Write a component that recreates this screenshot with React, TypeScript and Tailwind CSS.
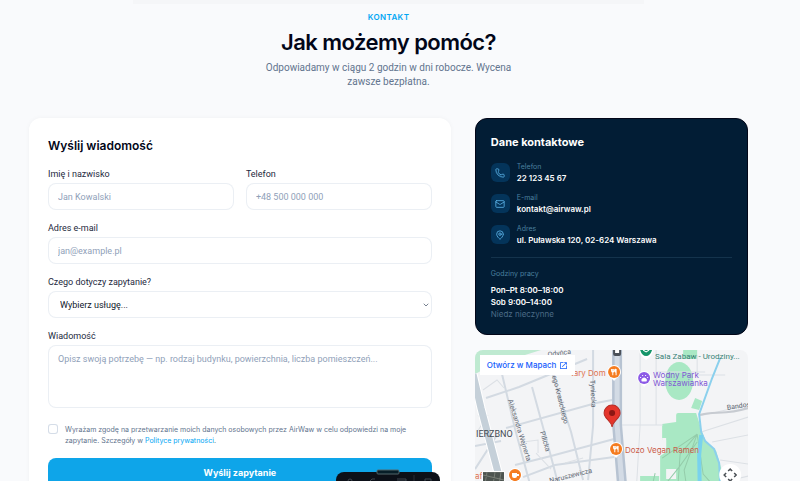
import React from 'react';
import { Mail, MapPin, Phone, ChevronDown } from 'lucide-react';

const labelClass = "block font-['Roboto',sans-serif] text-[9px] leading-3 text-slate-800";
const fieldClass =
  "block w-full rounded-lg border border-slate-200/70 bg-white px-[9px] font-['Roboto',sans-serif] text-[9px] leading-3 text-slate-900 placeholder:text-slate-400 outline-none";

const contacts = [
  { icon: Phone, label: 'Telefon', value: '22 123 45 67' },
  { icon: Mail, label: 'E-mail', value: 'kontakt@airwaw.pl' },
  { icon: MapPin, label: 'Adres', value: 'ul. Puławska 120, 02-624 Warszawa' },
];

const SectionHeader: React.FC = () => (
  <header className="text-center">
    <p className="text-[8px] leading-3 font-semibold tracking-wider text-sky-500">KONTAKT</p>
    <h2 className="mt-[5px] text-[22px] leading-7 font-semibold tracking-tight text-slate-950">Jak możemy pomóc?</h2>
    <p className="mx-auto mt-[5px] max-w-[260px] font-['Roboto',sans-serif] text-[10px] leading-[14px] text-slate-500">
      Odpowiadamy w ciągu 2 godzin w dni robocze. Wycena zawsze bezpłatna.
    </p>
  </header>
);

const ContactForm: React.FC = () => (
  <form className="col-span-3 rounded-xl bg-white px-[19px] py-5 shadow-[0_0_5px_rgba(15,23,42,0.04)]">
    <h3 className="text-[12px] leading-4 font-semibold text-slate-950">Wyślij wiadomość</h3>
    <div className="mt-[14px] grid grid-cols-2 gap-3">
      <div>
        <label htmlFor="name" className={labelClass}>Imię i nazwisko</label>
        <input id="name" type="text" placeholder="Jan Kowalski" className={`${fieldClass} mt-[3px] h-[27px]`} />
      </div>
      <div>
        <label htmlFor="phone" className={labelClass}>Telefon</label>
        <input id="phone" type="tel" placeholder="+48 500 000 000" className={`${fieldClass} mt-[3px] h-[27px]`} />
      </div>
    </div>
    <div className="mt-3">
      <label htmlFor="email" className={labelClass}>Adres e-mail</label>
      <input id="email" type="email" placeholder="jan@example.pl" className={`${fieldClass} mt-[3px] h-[27px]`} />
    </div>
    <div className="mt-3">
      <label htmlFor="service" className={labelClass}>Czego dotyczy zapytanie?</label>
      <div className="relative mt-[3px]">
        <select id="service" className={`${fieldClass} h-[27px] appearance-none pl-[11px]`}>
          <option>Wybierz usługę...</option>
          <option>Montaż</option>
          <option>Serwis</option>
        </select>
        <ChevronDown className="pointer-events-none absolute top-[10px] right-[2px] h-2 w-2 text-slate-700" />
      </div>
    </div>
    <div className="mt-3">
      <label htmlFor="message" className={labelClass}>Wiadomość</label>
      <textarea
        id="message"
        placeholder="Opisz swoją potrzebę — np. rodzaj budynku, powierzchnia, liczba pomieszczeń..."
        className={`${fieldClass} mt-[3px] h-[63px] resize-none py-[7px]`}
      />
    </div>
    <div className="mt-4 flex gap-[7px]">
      <input
        id="consent"
        type="checkbox"
        className="h-[10px] w-[10px] shrink-0 appearance-none rounded-[3px] border border-slate-300/80 bg-white"
      />
      <label htmlFor="consent" className="text-[7px] leading-[11px] text-slate-500">
        Wyrażam zgodę na przetwarzanie moich danych osobowych przez AirWaw w celu odpowiedzi na moje zapytanie.
        Szczegóły w <a href="#privacy" className="text-sky-500">Polityce prywatności</a>.
      </label>
    </div>
    <button type="submit" className="mt-3 h-[30px] w-full rounded-lg bg-[#0ea5e9] text-[9px] font-bold text-white">
      Wyślij zapytanie
    </button>
  </form>
);

const ContactCard: React.FC = () => (
  <section className="rounded-xl border border-slate-950 bg-[#021d35] px-[15px] pt-[15px] pb-[14px]">
    <h3 className="text-[11px] leading-4 font-bold text-white">Dane kontaktowe</h3>
    <ul className="mt-[13px] space-y-3">
      {contacts.map(({ icon: Icon, label, value }) => (
        <li key={label} className="flex items-center gap-[7px]">
          <span className="flex h-[19px] w-[19px] shrink-0 items-center justify-center rounded-md bg-[#04345a]">
            <Icon className="h-[10px] w-[10px] text-[#5cb3e8]" />
          </span>
          <div className="-my-1">
            <p className="text-[7px] leading-[10px] text-[#4a809f]">{label}</p>
            <p className="text-[8px] leading-3 font-semibold text-white">{value}</p>
          </div>
        </li>
      ))}
    </ul>
    <div className="mt-[13px] border-t border-[#14334c] pt-[11px]">
      <p className="text-[7px] leading-[10px] text-[#4a809f]">Godziny pracy</p>
      <div className="mt-[5px] text-[8px] leading-3 font-semibold text-white">
        <p>Pon–Pt 8:00–18:00</p>
        <p>Sob 9:00–14:00</p>
        <p className="font-normal text-[#4b6b86]">Niedz nieczynne</p>
      </div>
    </div>
  </section>
);

const FoodPin: React.FC<{ x: number; y: number }> = ({ x, y }) => (
  <g transform={`translate(${x} ${y})`}>
    <path d="M-7 0a7 7 0 1 1 14 0c0 4-4 5-7 9c-3-4-7-5-7-9z" fill="#fff" />
    <circle r="6" fill="#f57c20" />
    <path d="M-2.500-3v2a1.200 1.200 0 0 0 2.400 0v-2M-1.300-3v6.200M2-3v6.200M2-3c-1.500 1-1.500 3 0 3.500" stroke="#fff" strokeWidth="1" fill="none" />
  </g>
);

const MapDrawing: React.FC = () => (
  <svg
    viewBox="0 0 273 160"
    preserveAspectRatio="xMidYMin slice"
    className="block h-40 w-full font-['Roboto',sans-serif]"
    role="img"
    aria-label="Mapa"
  >
    <rect width="273" height="160" fill="#f3f4f6" />
    {/* parks */}
    <path d="M0 0H66L50 5L24 8L4 22L0 24z" fill="#bfead1" />
    <ellipse cx="204" cy="31" rx="14" ry="19" fill="#a9e8c4" />
    <path d="M220 48l7 3l-3 9l-8-2zM208 0h14v9h-14z" fill="#a9e8c4" />
    <path d="M187 74L201 72V65q0-2 2-2H221L227 82L231 92L241 101L246 118V160H196V144H191V132H185V106L191 102V90H187z" fill="#a9e8c4" />
    <path d="M165 126H184V160H165z" fill="#a9e8c4" />
    <path d="M187 88h4v10h-4zM191 119h10v10h-10z" fill="#f3f4f6" />
    <path
      d="M187 108L222 84L205 104L201 160M222 84L209 120L215 160M222 84L228 124L246 144M188 137L204 117L222 92M180 123l-8 35M170 131l11 16"
      fill="none"
      stroke="#94ccaa"
      strokeWidth="1"
    />
    {/* streets */}
    <g fill="none" stroke="#d3dae2" strokeWidth="2">
      <path d="M11 48L44 37L112 9M31 78L121 53L137 50M40 115L76 106L139 89M48 127L80 115L139 107" />
      <path d="M26 20L40 79L62 160M57 37L75 103L90 160M76 20L96 82L108 130M118 0V76L113 130" />
      <path d="M0 96L26 91M22 85L0 119M60 20L82 17" />
    </g>
    <g fill="none" stroke="#dce0e5" strokeWidth="1">
      <path d="M165 0V75L160 160M147 75H188M181 0V75M181 22H230M222 5V25H250M224 66L273 55M226 82L273 67M237 92L273 85M245 110L273 114M244 133L273 126" />
      <path d="M48 92L63 90V103M61 103L76 119M90 113L108 108M3 65L13 80M13 65L2 82M8 40L22 30L29 38" />
    </g>
    {/* main roads */}
    <path d="M-2 24L6 58L20 111L33 160" stroke="#fff" strokeWidth="9" fill="none" />
    <path d="M-2 24L6 58L20 111L33 160" stroke="#c5d0d9" strokeWidth="7" fill="none" />
    <path d="M142 0V75L149 160" stroke="#b7c3d2" strokeWidth="10" fill="none" />
    <path d="M142 0V75L149 160" stroke="#d3dbe5" strokeWidth="5" fill="none" />
    <path d="M224 65C240 61 250 65 273 58" stroke="#c7cbd1" strokeWidth="2" fill="none" />
    {/* stream */}
    <path d="M245 8L237 28L224 64L226 82L230 91L239 99L244 113L246 160" stroke="#8bd0ed" strokeWidth="2" fill="none" />
    <path d="M226 85L224 105L225 160" stroke="#79d2ed" strokeWidth="4" fill="none" />
    {/* street names */}
    <g fontSize="7" fill="#5f6873">
      <text transform="translate(33 50) rotate(73)">Aleksandra Wejnerta</text>
      <text transform="translate(77 26) rotate(76)">ego Krasickiego</text>
      <text transform="translate(65 82) rotate(74)">Pilicka</text>
      <text transform="translate(115 30) rotate(87)">Tyniecka</text>
      <text transform="translate(75 133) rotate(-14)">Naruszewicza</text>
      <text transform="translate(73 7) rotate(-8)">Odyńca</text>
      <text transform="translate(252 60) rotate(-9)">Bandoska</text>
    </g>
    <text x="1" y="87" fontSize="9" fill="#434b54">IERZBNO</text>
    <g fontSize="8" className="font-['Inter',sans-serif]">
      <text x="96" y="26" fill="#df7250">tary Dom</text>
      <text x="150" y="103" fill="#cb5c4a">Dozo Vegan Ramen</text>
      <text x="178" y="28" fill="#8158d5">Wodny Park</text>
      <text x="178" y="36" fill="#8158d5">Warszawianka</text>
      <text x="0" y="129" fill="#df7250">af</text>
      <text x="180" y="9" className="font-['Roboto',sans-serif]" fill="#368275">Sala Zabaw - Urodziny...</text>
    </g>
    {/* places */}
    <FoodPin x={139} y={22} />
    <FoodPin x={141} y={99} />
    <g transform="translate(169 28)">
      <path d="M-7 0a7 7 0 1 1 14 0c0 4-4 5-7 9c-3-4-7-5-7-9z" fill="#fff" />
      <circle r="6" fill="#8c5ae6" />
      <path d="M-2 3q-1-2 2-3q3 1 2 3z" fill="#fff" stroke="#fff" />
      <path d="M-3.500-1v1M-1.500-3v1M1.500-3v1M3.500-1v1" stroke="#fff" />
    </g>
    <path d="M164 0H178Q178 5 171 10Q164 5 164 0z" fill="#fff" />
    <path d="M165 0H177Q175 6 171 6Q167 6 165 0z" fill="#159569" />
    <path d="M168 0l3 2l3-2" stroke="#fff" fill="none" />
    <path d="M138 0h8v4q0 2-2 2h-4q-2 0-2-2z" fill="#4a5058" />
    <path d="M140 0h4v3h-4z" fill="#fff" />
    <g transform="translate(40 125)">
      <circle r="7" fill="#fff" />
      <circle r="6" fill="#f57c20" />
      <path d="M-3-2h5v3q0 2-2 2h-1q-2 0-2-2zM2-1h2v2h-2" fill="#fff" />
    </g>
    <path d="M137 77C136 70 129 69 129 63a8 8 0 0 1 16 0C145 69 138 70 137 77z" fill="#e4352b" stroke="#b72b24" strokeWidth="1" />
    <circle cx="137" cy="63" r="3" fill="#8c1713" />
    {/* satellite preview and camera control */}
    <rect x="7" y="121" width="23" height="38" rx="1" fill="#fff" />
    <rect x="8" y="122" width="21" height="36" fill="#4d5450" />
    <path d="M8 125L29 130M12 122L9 140M20 122L17 141M26 122L23 141" stroke="#777d75" />
    <circle cx="255" cy="125" r="11" fill="#fff" />
    <path d="M253 121l2-2l2 2M259 123l2 2l-2 2M251 123l-2 2l2 2M253 129l2 2l2-2" stroke="#4c5156" strokeWidth="1.500" fill="none" />
  </svg>
);

const LocationMap: React.FC = () => (
  <section className="relative overflow-hidden rounded-lg">
    <MapDrawing />
    <a
      href="#map"
      className="absolute top-[5px] left-[5px] flex h-5 items-center gap-[3px] bg-white px-[7px] text-[8px] font-medium text-blue-600"
    >
      Otwórz w Mapach
      <svg viewBox="0 0 24 24" className="h-[9px] w-[9px]" fill="currentColor" aria-hidden="true">
        <path d="M19 19H5V5h7V3H3v18h18v-9h-2v7zM14 3v2h3.600l-9.800 9.800 1.400 1.400L19 6.400V10h2V3h-7z" />
      </svg>
    </a>
  </section>
);

const FloatingBar: React.FC = () => (
  <div className="fixed bottom-0 left-[42%] h-[9px] w-[104px] rounded-t-lg bg-[#0c1018]">
    <svg viewBox="0 0 104 9" className="absolute inset-0 h-full w-full overflow-visible" aria-hidden="true">
      <rect x="41" y="-2" width="22" height="4" rx="1" fill="#071e28" stroke="#53666b" />
      <path d="M12 9q0-2 2-2t2 2M34 9l2-2h3M61 7h9v2h-9M89 9V7h6v2" fill="none" stroke="#3d444d" />
      <path d="M78 3v6" stroke="#282d34" />
    </svg>
  </div>
);

export default function App() {
  return (
    <div className="h-screen overflow-hidden bg-[#f9fafc] font-['Inter',sans-serif]">
      <div className="mr-6 px-7 pl-[29px]">
        <div className="mx-auto h-1 w-[71%] bg-[#f5f6f8]" />
        <div className="pt-[7px]">
          <SectionHeader />
        </div>
        <main className="mt-[29px] grid grid-cols-5 items-start gap-6">
          <ContactForm />
          <div className="col-span-2 space-y-[15px]">
            <ContactCard />
            <LocationMap />
          </div>
        </main>
      </div>
      <FloatingBar />
    </div>
  );
}
